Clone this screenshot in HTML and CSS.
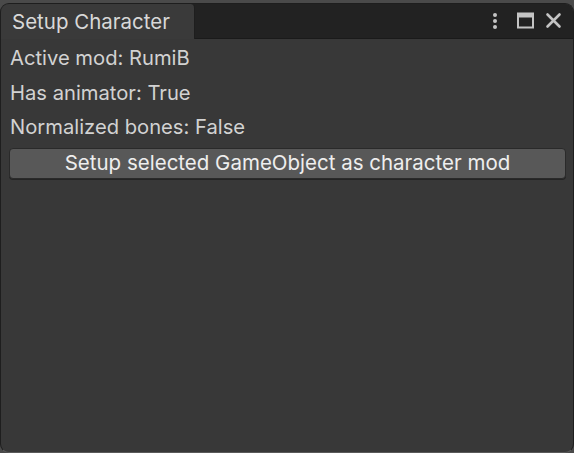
FILE: index.html
```html
<!DOCTYPE html>
<html>
<head>
<meta charset="utf-8">
<link rel="stylesheet" href="styles.css">
</head>
<body>
<div class="frame">
  <div class="window">
    <div class="tabbar">
      <div class="tab">Setup Character</div>
      <div class="tools">
        <svg class="ico" width="8" height="18" viewBox="0 0 8 18"><circle cx="4" cy="3" r="2" fill="#c4c4c4"/><circle cx="4" cy="9" r="2" fill="#c4c4c4"/><circle cx="4" cy="15" r="2" fill="#c4c4c4"/></svg>
        <svg class="ico" width="17" height="17" viewBox="0 0 17 17"><rect x="1" y="1.5" width="15" height="14" fill="none" stroke="#c4c4c4" stroke-width="2"/><rect x="1" y="1.5" width="15" height="4" fill="#c4c4c4"/></svg>
        <svg class="ico" width="17" height="17" viewBox="0 0 17 17"><path d="M2.5 2.5 L14.5 14.5 M14.5 2.5 L2.5 14.5" stroke="#c4c4c4" stroke-width="2.6" stroke-linecap="round"/></svg>
      </div>
    </div>
    <div class="content">
      <div class="label">Active mod: RumiB</div>
      <div class="label">Has animator: True</div>
      <div class="label">Normalized bones: False</div>
      <button class="btn">Setup selected GameObject as character mod</button>
    </div>
  </div>
</div>
</body>
</html>
```

FILE: styles.css
```css
html, body {
  margin: 0;
  padding: 0;
  background: #4a4a4a;
}
.frame {
  width: 574px;
  height: 453px;
  padding-top: 3px;
  box-sizing: border-box;
  background: #4a4a4a;
}
.window {
  height: 450px;
  box-sizing: border-box;
  background: #383838;
  border: 1px solid #1e1e1e;
  border-bottom-color: #5a5a5a;
  border-radius: 9px;
  overflow: hidden;
  display: flex;
  flex-direction: column;
  font-family: Inter, "Noto Sans", sans-serif;
  color: #d2d2d2;
}
.tabbar {
  height: 34px;
  flex: none;
  background: #222222;
  border-bottom: 1px solid #1a1a1a;
  display: flex;
  align-items: stretch;
}
.tab {
  width: 182px;
  padding-left: 11px;
  background: #3a3a3a;
  border-right: 1px solid #1e1e1e;
  border-top-right-radius: 4px;
  margin-bottom: -1px;
  font-size: 20.5px;
  line-height: 35px;
  color: #d8d8d8;
}
.tools {
  margin-left: auto;
  display: flex;
  align-items: center;
  padding-right: 11px;
  padding-bottom: 1px;
}
.ico { display: block; }
.tools .ico:nth-child(1) { margin-right: 18px; }
.tools .ico:nth-child(2) { margin-right: 11px; }
.content {
  padding: 2px 7px 0 8px;
  display: flex;
  flex-direction: column;
}
.label {
  font-size: 20.2px;
  line-height: 34.5px;
  padding-left: 1px;
  color: #d2d2d2;
}
.btn {
  margin-top: 3px;
  height: 31px;
  background: #585858;
  border: 1px solid #2a2a2a;
  border-radius: 4px;
  box-shadow: 0 1px 0 #242424;
  color: #eeeeee;
  font-family: Inter, "Noto Sans", sans-serif;
  font-size: 20.5px;
  padding: 0 0 1px 0;
}
```
